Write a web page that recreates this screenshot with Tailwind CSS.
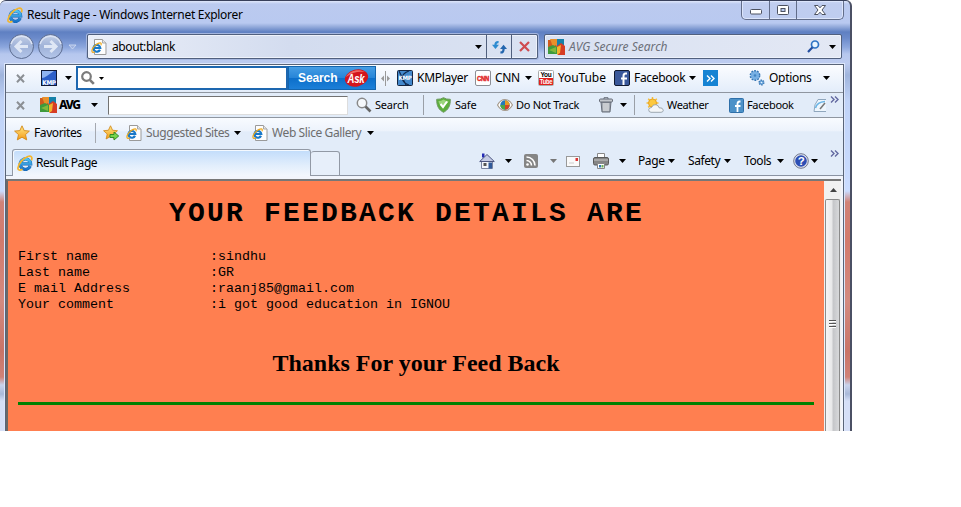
<!DOCTYPE html>
<html lang="en">
<head>
<meta charset="utf-8">
<title>Result Page</title>
<script src="https://cdn.jsdelivr.net/npm/@tailwindcss/browser@4"></script>
</head>
<body class="bg-white font-['Noto_Sans',sans-serif] text-[12px] leading-4 text-black">
<svg class="absolute size-0">
  <defs>
    <linearGradient id="blue" x1="0" y1="0" x2="0" y2="1"><stop offset="0" stop-color="#4fc3f3"/><stop offset="1" stop-color="#1a72c6"/></linearGradient>
    <linearGradient id="gold" x1="0" y1="0" x2="0" y2="1"><stop offset="0" stop-color="#ffe98a"/><stop offset="1" stop-color="#f59a14"/></linearGradient>
    <linearGradient id="orb" x1="0" y1="0" x2="0" y2="1"><stop offset="0" stop-color="#c3cfe6"/><stop offset=".5" stop-color="#9fb2d8"/><stop offset="1" stop-color="#b4c6ea"/></linearGradient>
  </defs>
  <symbol id="ie" viewBox="0 0 16 16">
    <path d="M13.2 11.2A5.2 5.2 0 1 1 13.600 8.800H4.500" fill="none" stroke="#1263ae" stroke-width="3.300"/>
    <path d="M13.2 11.2A5.2 5.2 0 1 1 13.600 8.800H4.500" fill="none" stroke="url(#blue)" stroke-width="2.500"/>
    <path d="M14.400 5.400C15.800 2 14 .3 10.800 1.500C6 3.300 1.200 9 .9 13c-.1 2.300 2 2.600 4.600 1.300" fill="none" stroke="#f3b62c" stroke-width="1.700"/>
  </symbol>
  <symbol id="iepage" viewBox="0 0 16 16">
    <path d="M3.500.5h8l3.500 3.500v11.500h-11.500z" fill="#fdfdfd" stroke="#9a9a9a"/><path d="M11.500.5v3.500h3.500" fill="#e4e4e4" stroke="#a8a8a8"/>
    <path d="M9 10.800A3.400 3.400 0 1 1 9.300 9H3.500" fill="none" stroke="#1878c8" stroke-width="2.200"/>
    <path d="M10 6.200c.8-2.200-.4-2.800-2.800-1.800C4.200 5.700 1 9.200.9 12c0 1.600 1.300 1.700 2.900.8" fill="none" stroke="#f0a91a" stroke-width="1.200"/>
  </symbol>
  <symbol id="caret" viewBox="0 0 7 4"><path d="M0 0h7L3.500 4z" fill="currentColor"/></symbol>
  <symbol id="close" viewBox="0 0 9 9"><path d="M1 .8l7 7.400M8 .8L1 8.200" stroke="#8b8f94" stroke-width="2"/></symbol>
  <symbol id="avg" viewBox="0 0 17 16">
    <path d="M0 1h8l1 7H0z" fill="#cf5a1e"/><path d="M2 0h7v5L5 8z" fill="#e8902a"/><path d="M9 0h7v8l-4-2-3 2z" fill="#1580a8"/><path d="M0 8l5-2 4 2v7H0z" fill="#3f9a3c"/><path d="M1 11l7-3v6z" fill="#81b83c"/><path d="M9 7l4-3 4 3v9h-7z" fill="#d63c24"/><path d="M9 8l4-2-1 8-3 2z" fill="#f2b32c"/>
  </symbol>
  <symbol id="chev" viewBox="0 0 9 7"><path d="M1 .5l3 3-3 3M5 .5l3 3-3 3" fill="none" stroke="currentColor" stroke-width="1.400"/></symbol>
  <symbol id="star" viewBox="0 0 16 16"><path d="M8 .8l2.200 4.800 5.200.5-3.900 3.500 1.200 5.300L8 12.200l-4.700 2.700 1.200-5.300L.6 6.100l5.200-.5z" fill="url(#gold)" stroke="#d28a1a" stroke-width=".9"/></symbol>
</svg>

<main class="relative flex h-[431px] w-[852px] flex-col overflow-hidden rounded-t-[6px] border-t border-r-2 border-t-[#38405a] border-r-[#4b5064] bg-[linear-gradient(180deg,#dfe7fa_0px,#bbcaef_3px,#b9c9f0_22px,#92a9da_26px,#5f80c2_31px,#6b8aca_37px,#8ba6dd_46px,#b6c7ee_53px,#bdccf0_62px,#9fb4dc_74px,#c0d3f7_100px,#cadcff_190px,#d08277_201px,#d27a6c_240px,#d38a80_300px,#c97467_350px,#d08277_376px,#c9d3ec_384px,#a9b9d9_393px,#d5dff7_400px,#d5dff7_431px)]">
  <!-- Title bar -->
  <header class="flex h-[31px] shrink-0 items-start pl-[7px]">
    <svg class="mt-[6px] size-4 shrink-0"><use href="#ie"/></svg>
    <h1 class="mt-[6px] ml-1 w-[714px] whitespace-nowrap tracking-[-0.29px]">Result Page - Windows Internet Explorer</h1>
    <div class="flex h-[19px] w-[103px] shrink-0 rounded-b-[5px] border border-t-0 border-[#626d89] bg-[#c2cff0]/70 shadow-[inset_0_0_0_1px_#dce5fb]">
      <span class="flex w-[28px] items-center justify-center border-r border-[#626d89]"><svg class="mt-1 h-[6px] w-3" viewBox="0 0 12 6"><rect x=".5" y=".5" width="11" height="4.500" rx="1" fill="#fff" stroke="#4d5260"/></svg></span>
      <span class="flex w-[27px] items-center justify-center border-r border-[#626d89]"><svg class="h-[10px] w-3" viewBox="0 0 12 10"><rect x=".5" y=".5" width="11" height="9" rx="1" fill="#fff" stroke="#4d5260"/><rect x="4" y="3.500" width="4" height="3" fill="#b9c9f0" stroke="#4d5260"/></svg></span>
      <span class="flex flex-1 items-center justify-center"><svg class="h-[10px] w-3" viewBox="0 0 12 10"><path d="M.5.5h3.500l2 2.300 2-2.300h3.500L8 5l3.500 4.500H8L6 7.200 4 9.500H.5L4 5z" fill="#fff" stroke="#4d5260"/></svg></span>
    </div>
  </header>

  <!-- Navigation bar -->
  <nav class="flex h-[32px] shrink-0 items-start pl-[8px]">
    <svg class="mt-[1px] h-[27px] w-[70px] shrink-0" viewBox="0 0 70 27">
      <g fill="url(#orb)" stroke="#5c6c90"><circle cx="13.500" cy="13.500" r="12"/><circle cx="42.500" cy="13.500" r="12"/></g>
      <path d="M3 11a11 11 0 0 1 21 0M32 11a11 11 0 0 1 21 0" fill="none" stroke="#dbe3f3" stroke-width="1.500"/>
      <path d="M20 13.500H8m5.500-5.500L8 13.500l5.500 5.500M36 13.500h12m-5.500-5.500l5.500 5.500-5.500 5.500" fill="none" stroke="#dfe7f5" stroke-width="3"/>
      <path d="M61 12h7l-3.500 4z" fill="#9db1de" stroke="#d3def4" stroke-width=".8"/>
    </svg>
    <div class="mt-[2px] ml-[9px] flex h-[25px] w-[451px] shrink-0 items-center rounded-[2px] border border-[#51607e] bg-[linear-gradient(90deg,#ebeff8,#d3dcef_45%,#dae2f2)] pl-[3px] shadow-[inset_0_0_0_1px_#eef2fb,0_0_0_1px_#a4b6df]">
      <svg class="size-4"><use href="#iepage"/></svg>
      <span class="ml-[5px] w-[364px] whitespace-nowrap tracking-[-0.4px]">about:blank</span>
      <svg class="mr-[4px] h-1 w-[7px]"><use href="#caret"/></svg>
      <span class="flex h-full w-[25px] items-center justify-center border-l border-[#51607e]"><svg class="h-4 w-[15px]" viewBox="0 0 16 16"><path d="M7 2.700C4.500 2.500 3.700 4 3.700 6V7" fill="none" stroke="#2e8bd0" stroke-width="2.400"/><path d="M0 5.500h7.400L3.700 10z" fill="#2e8bd0"/><path d="M9 13.800c2.500.2 3.300-1.300 3.300-3.300V9" fill="none" stroke="#2466ae" stroke-width="2.400"/><path d="M8.600 10H16l-3.700-4.500z" fill="#2466ae"/></svg></span>
      <span class="flex h-full w-[26px] items-center justify-center border-l border-[#51607e]"><svg class="size-[11px]" viewBox="0 0 11 11"><path d="M1 1l9 9M10 1L1 10" stroke="#cf4c50" stroke-width="2.200"/></svg></span>
    </div>
    <div class="mt-[2px] ml-[6px] flex h-[25px] w-[298px] shrink-0 items-center rounded-[2px] border border-[#51607e] bg-[linear-gradient(90deg,#d9e1f2,#e3e8f4)] pl-[3px] shadow-[inset_0_0_0_1px_#eef2fb]">
      <svg class="h-4 w-[17px]"><use href="#avg"/></svg>
      <span class="ml-[4px] w-[238px] whitespace-nowrap tracking-[0.02px] text-[#6c7079] italic">AVG Secure Search</span>
      <svg class="h-[13px] w-[13px]" viewBox="0 0 13 13"><circle cx="8" cy="4.500" r="3.500" fill="#eaf6ff" stroke="#2f74c4" stroke-width="1.700"/><path d="M5.500 7.300L1 12" stroke="#234fa0" stroke-width="2.200"/></svg>
      <svg class="ml-[9px] h-1 w-[7px]"><use href="#caret"/></svg>
    </div>
  </nav>

  <div class="ml-[5px] flex w-[839px] flex-1 flex-col border border-b-0 border-[#596478] bg-[#e2ecf9] shadow-[0_0_0_1px_#dce6fb]">
    <!-- Ask toolbar -->
    <div class="flex h-[28px] shrink-0 items-center border-b border-[#8f96a0] bg-[linear-gradient(#fbfcff,#e3edfa)] pb-px pl-[10px] tracking-[-0.3px] whitespace-nowrap *:shrink-0">
      <svg class="size-[9px]"><use href="#close"/></svg>
      <svg class="ml-4 size-4" viewBox="0 0 16 16"><rect x=".5" y=".5" width="15" height="15" fill="#2d5fc8" stroke="#101935"/><path d="M1 8c3 0 6-3 12-7H1z" fill="#8fb3f0"/><text x="1.300" y="14.500" font-size="6.500" font-weight="700" fill="#fff" textLength="13.500" lengthAdjust="spacingAndGlyphs" font-family="DejaVu Sans">KMP</text></svg>
      <svg class="ml-2 h-1 w-[7px]"><use href="#caret"/></svg>
      <div class="ml-1 flex h-[24px] w-[212px] items-center border-2 border-[#1d67b0] bg-white pl-[3px]">
        <svg class="size-[14px]" viewBox="0 0 14 14"><circle cx="5.500" cy="5.500" r="4.300" fill="none" stroke="#7b7b7b" stroke-width="2.200"/><path d="M8.800 8.800l4 4" stroke="#7b7b7b" stroke-width="2.600"/></svg>
        <svg class="ml-[4px] h-[3px] w-[5px]" viewBox="0 0 5 3"><path d="M0 0h5L2.500 3z"/></svg>
      </div>
      <div class="flex h-[24px] w-[88px] items-center border border-[#1465ae] bg-[linear-gradient(#469de4,#2785d8_48%,#0d6fca_52%,#1c7fd8)] pl-[9px]">
        <b class="w-[46px] font-['Liberation_Sans',sans-serif] tracking-[-0.1px] text-white">Search</b>
        <svg class="h-[20px] w-[25px]" viewBox="0 0 25 20"><ellipse cx="12.500" cy="10" rx="11.800" ry="8.500" transform="rotate(-14 12.500 10)" fill="#d4151c"/><path d="M2 9C5 3 14 0 21 4c-6-1-13 0-19 5z" fill="#ee6b66"/><text x="3.500" y="15" font-family="Liberation Sans" font-size="13" font-weight="700" font-style="italic" fill="#fff" textLength="17" lengthAdjust="spacingAndGlyphs">Ask</text></svg>
      </div>
      <svg class="ml-[5px] h-[15px] w-[9px]" viewBox="0 0 9 15"><path d="M4.500 0v15" stroke="#999"/><path d="M3 4.500v6L0 7.500zM6 4.500v6l3-3z" fill="#999"/></svg>
      <svg class="ml-[7px] size-4" viewBox="0 0 16 16"><rect x=".5" y=".5" width="15" height="15" rx="1" fill="#4388cc" stroke="#15253f"/><path d="M12 1C3 4 3 12 12 15M2 1l7 14" fill="none" stroke="#102a50" stroke-width="1.200"/><text x="1.500" y="10" font-size="6" font-weight="700" fill="#fff" textLength="13" font-family="DejaVu Sans" lengthAdjust="spacingAndGlyphs">KMP</text></svg>
      <span class="ml-1 w-[58px]">KMPlayer</span>
      <svg class="size-4" viewBox="0 0 16 16"><rect x=".5" y=".5" width="15" height="15" rx="1.500" fill="#fff" stroke="#8c8f96"/><text x="2" y="10.500" font-family="Liberation Sans" font-size="7" font-weight="700" fill="#e02222" stroke="#e02222" stroke-width=".4" textLength="12" lengthAdjust="spacingAndGlyphs">CNN</text></svg>
      <span class="ml-1 w-[30px]">CNN</span>
      <svg class="h-1 w-[7px]"><use href="#caret"/></svg>
      <svg class="ml-[6px] size-4" viewBox="0 0 16 16"><rect x=".5" y=".5" width="15" height="15" rx="1" fill="#fff" stroke="#aaa"/><rect x="1" y="8" width="14" height="7" fill="#e2211c"/><g font-family="Liberation Sans" font-weight="700" font-size="7"><text x="2.500" y="6.800" textLength="11" lengthAdjust="spacingAndGlyphs">You</text><text x="1.800" y="14" fill="#fff" textLength="12.500" lengthAdjust="spacingAndGlyphs">Tube</text></g></svg>
      <span class="ml-1 w-[56px] tracking-[-0.1px]">YouTube</span>
      <svg class="size-4" viewBox="0 0 16 16"><rect x=".5" y=".5" width="15" height="15" rx="1.500" fill="#3a589a" stroke="#111a30"/><path d="M13 3.500h-1.500Q9.500 3.500 9.500 6v9M7 8.500h6" fill="none" stroke="#fff" stroke-width="2"/></svg>
      <span class="ml-1 w-[55px]">Facebook</span>
      <svg class="h-1 w-[7px]"><use href="#caret"/></svg>
      <span class="ml-[7px] flex h-4 w-[15px] items-center justify-center bg-[#1683d3] text-white"><svg class="h-[7px] w-[9px]"><use href="#chev"/></svg></span>
      <svg class="ml-[31px] size-4" viewBox="0 0 16 16"><g fill="#70ace2" stroke="#3676b4"><circle cx="6" cy="5.500" r="4.300" stroke-width="2.200" stroke-dasharray="1.800 .9"/><circle cx="12.500" cy="12.500" r="2.200" stroke-width="1.700" stroke-dasharray="1.300 .8"/></g><circle cx="6" cy="5.500" r="4" fill="#77b0e4"/><circle cx="6" cy="5.500" r="1.300" fill="#4284c2"/><circle cx="12.500" cy="12.500" r=".8" fill="#e5f1fc"/></svg>
      <span class="ml-1 w-[54px]">Options</span>
      <svg class="h-1 w-[7px]"><use href="#caret"/></svg>
    </div>

    <!-- AVG toolbar -->
    <div class="flex h-[25px] shrink-0 items-center border-b border-[#8f96a0] pl-[10px] text-[11px] tracking-[-0.2px] whitespace-nowrap *:shrink-0">
      <svg class="size-[9px]"><use href="#close"/></svg>
      <svg class="ml-[15px] h-4 w-[17px]"><use href="#avg"/></svg>
      <b class="ml-[2px] w-[32px] text-[12px] font-extrabold tracking-[-1.3px]">AVG</b>
      <svg class="h-1 w-[7px]"><use href="#caret"/></svg>
      <div class="ml-[10px] h-[19px] w-[240px] border border-t-[#727272] border-r-[#ddd] border-b-[#ddd] border-l-[#727272] bg-white"></div>
      <svg class="ml-[8px] size-4" viewBox="0 0 16 16"><circle cx="6" cy="6" r="4.700" fill="#f5f8fb" stroke="#888" stroke-width="1.500"/><path d="M9.500 9.500l5 5" stroke="#666" stroke-width="2.600"/></svg>
      <span class="ml-[3px] w-[48px]">Search</span>
      <i class="h-[20px] w-px bg-[#9a9fa7]"></i>
      <svg class="ml-[12px] h-4 w-[15px]" viewBox="0 0 15 16"><path d="M7.500.7Q10.500 2.500 14.300 2.300C14.500 9 12 13 7.500 15.300 3 13 .5 9 .7 2.300Q4.500 2.500 7.500.7z" fill="#5cae3c" stroke="#6e9a62"/><path d="M2.500 4Q5 4 7.500 2.500 10 4 12.500 4 12 7 7 8 3 9 2.500 4z" fill="#9bd67c"/><path d="M4.500 7l2.500 3 4-5.500" fill="none" stroke="#fff" stroke-width="2"/></svg>
      <span class="ml-[4px] w-[42px]">Safe</span>
      <svg class="size-4" viewBox="0 0 16 16"><path d="M.5 8Q3.500 2.500 8 2.500T15.500 8Q12.500 13.500 8 13.500T.5 8z" fill="#fff" stroke="#a59a8c" stroke-width="1.200"/><circle cx="8" cy="8" r="4.700" fill="#2478b8"/><path d="M8 8V3.300A4.700 4.700 0 0 1 12.700 8z" fill="#e69c22"/><path d="M8 8h4.700A4.700 4.700 0 0 1 8 12.700z" fill="#d44326"/><path d="M8 8v4.700A4.700 4.700 0 0 1 3.300 8z" fill="#4da645"/></svg>
      <span class="ml-[3px] w-[83px] tracking-[-0.3px]">Do Not Track</span>
      <svg class="h-4 w-[14px]" viewBox="0 0 14 16"><path d="M2 5h10l-1 10H3z" fill="#a3a9b2" stroke="#676d78"/><path d="M5 6v8M7 6v8M9 6v8" stroke="#eee"/><path d="M5 2V.7h4V2" fill="none" stroke="#676d78"/><rect x=".5" y="2" width="13" height="3" rx="1" fill="#c3c7cd" stroke="#676d78"/></svg>
      <svg class="ml-[7px] h-1 w-[7px]"><use href="#caret"/></svg>
      <i class="ml-[7px] h-[20px] w-px bg-[#9a9fa7]"></i>
      <svg class="ml-[11px] h-4 w-[18px]" viewBox="0 0 18 16"><g stroke="#f4bd3c" stroke-width="1.500"><path d="M6.500 0v12M.5 6h12M2.200 1.800l8.600 8.600M10.800 1.800l-8.600 8.600"/></g><circle cx="6.500" cy="6" r="4" fill="#fdc93f" stroke="#e8a422"/><path d="M5 15.300Q2.500 15 2.700 12.700 3 10.500 5.500 10.500 7 7 10 7.700 12.500 8 13 10.700 17 10.500 17.300 13.200 17.200 15.300 15 15.300z" fill="#f4f6f8" stroke="#8c959e" stroke-width=".8"/></svg>
      <span class="ml-[3px] w-[62px] tracking-[-0.35px]">Weather</span>
      <svg class="h-[15px] w-[15px]" viewBox="0 0 15 15"><rect x=".5" y=".5" width="14" height="14" rx="1" fill="#4c91c8" stroke="#2e6fa9"/><path d="M11.500 3.500h-1Q8.500 3.500 8.500 6v8M6 8h5.500" fill="none" stroke="#fff" stroke-width="1.800"/></svg>
      <span class="ml-[3px] w-[66px] tracking-[-0.35px]">Facebook</span>
      <svg class="h-[15px] w-[13px]" viewBox="0 0 13 15"><path d="M13 1.500H5Q1 6 1 13.500H13" fill="#eef6fd" stroke="#8fa6bd"/><path d="M2.500 10Q4 4 12 3.500" fill="none" stroke="#69b4e6" stroke-width="1.500"/><path d="M7 11l5-6" stroke="#777" stroke-width="1.500"/></svg>
      <svg class="mb-[11px] ml-[4px] h-[7px] w-[9px] text-[#6268a0]"><use href="#chev"/></svg>
    </div>

    <!-- Favorites bar -->
    <div class="flex h-[31px] shrink-0 items-center bg-[linear-gradient(#f8fbff,#edf3fc_40%,#e2ecf9_45%)] pb-px pl-[8px] tracking-[-0.4px] whitespace-nowrap *:shrink-0">
      <svg class="size-4"><use href="#star"/></svg>
      <span class="ml-[4px] w-[61px]">Favorites</span>
      <i class="h-[20px] w-px bg-[#a5a9b0]"></i>
      <svg class="ml-[7px] size-4" viewBox="0 0 16 16"><use href="#star" width="15" height="15"/><path d="M7 9.500h4V7l4.700 4-4.700 4v-2.500H7z" fill="#77d44c" stroke="#328e27"/></svg>
      <svg class="ml-[7px] size-4"><use href="#iepage"/></svg>
      <span class="ml-[4px] w-[88px] text-[#6d6d6d]">Suggested Sites</span>
      <svg class="h-1 w-[7px]"><use href="#caret"/></svg>
      <svg class="ml-[11px] size-4"><use href="#iepage"/></svg>
      <span class="ml-[4px] w-[95px] text-[#6d6d6d]">Web Slice Gallery</span>
      <svg class="h-1 w-[7px]"><use href="#caret"/></svg>
    </div>

    <!-- Tabs and commands -->
    <div class="flex h-[27px] shrink-0 items-end whitespace-nowrap *:shrink-0">
      <i class="h-px w-[6px] bg-[#8a93a3]"></i>
      <div class="flex h-[27px] w-[299px] items-center rounded-t-[3px] border border-b-0 border-[#9299a5] bg-[linear-gradient(#c1dcfb,#e2eefc_60%,#f3f7fd)] pl-[4px] shadow-[inset_1px_1px_0_#f4f9ff]">
        <svg class="size-4"><use href="#ie"/></svg>
        <span class="ml-[3px] tracking-[-0.45px]">Result Page</span>
      </div>
      <div class="h-[25px] w-[29px] rounded-t-[3px] border border-l-0 border-[#9299a5] bg-[#e7effa]"></div>
      <div class="flex h-[27px] flex-1 items-center border-b border-[#8a93a3] pb-[2px] pl-[139px] tracking-[-0.4px] *:shrink-0">
        <svg class="size-4" viewBox="0 0 16 16"><path d="M3 .500h2.500v4H3z" fill="#242ab4"/><path d="M2.500 8h11v7.500h-11z" fill="#f4f6fb" stroke="#7b84a0"/><path d="M.7 8.500L8 1.500l7.300 7z" fill="#c4cbe4" stroke="#4c5580"/><path d="M9.500 9.500h3.500v6H9.500z" fill="#315a9a"/><path d="M4.500 10h3v3h-3z" fill="#555"/></svg>
        <svg class="ml-[10px] h-1 w-[7px]"><use href="#caret"/></svg>
        <svg class="ml-[12px] size-[14px]" viewBox="0 0 14 14"><rect width="14" height="14" rx="2" fill="#858585"/><circle cx="3.500" cy="10.500" r="1.300" fill="#fff"/><path d="M2.500 6.500a5 5 0 0 1 5 5M2.500 3a8.500 8.500 0 0 1 8.500 8.500" fill="none" stroke="#fff" stroke-width="1.600"/></svg>
        <svg class="ml-[12px] h-1 w-[7px] text-[#777]"><use href="#caret"/></svg>
        <svg class="ml-[9px] h-[11px] w-[14px]" viewBox="0 0 14 11"><rect x=".5" y=".5" width="13" height="10" fill="#fafafa" stroke="#999"/><rect x="9.500" y="2" width="2.500" height="3" fill="#dc3434"/><path d="M3 7h5" stroke="#ccc"/></svg>
        <svg class="ml-[13px] size-4" viewBox="0 0 16 16"><path d="M4.500.500h7V6h-7z" fill="#fff" stroke="#888"/><rect x=".5" y="4.500" width="15" height="7.500" rx="1.500" fill="#858585" stroke="#5a5a5a"/><path d="M1 7h14" stroke="#c7c7c7"/><path d="M4.500 10.500h7v5h-7z" fill="#fff" stroke="#888"/><path d="M6 12h2v2.500H6z" fill="#3676b4"/><path d="M8.500 12h2v2.500h-2z" fill="#6aad55"/></svg>
        <svg class="ml-[10px] h-1 w-[7px]"><use href="#caret"/></svg>
        <span class="ml-[12px] w-[30px]">Page</span><svg class="h-1 w-[7px]"><use href="#caret"/></svg>
        <span class="ml-[13px] w-[36px]">Safety</span><svg class="h-1 w-[7px]"><use href="#caret"/></svg>
        <span class="ml-[13px] w-[33px]">Tools</span><svg class="h-1 w-[7px]"><use href="#caret"/></svg>
        <svg class="ml-[9px] size-4" viewBox="0 0 16 16"><circle cx="8" cy="8" r="7.300" fill="#dfe3ef" stroke="#70768c"/><circle cx="8" cy="8" r="5.800" fill="#2c4eb4"/><text x="8" y="12.200" text-anchor="middle" font-family="Liberation Sans" font-weight="700" font-size="11.500" fill="#fff">?</text></svg>
        <svg class="ml-[2px] h-1 w-[7px]"><use href="#caret"/></svg>
        <svg class="mb-[15px] ml-[12px] h-[7px] w-[9px] text-[#6268a0]"><use href="#chev"/></svg>
      </div>
    </div>

    <!-- Document viewport -->
    <div class="flex flex-1 bg-[#f2f5fc] pt-[3px]">
      <article class="w-[818px] border-t-2 border-l-2 border-[#696969] border-t-[#777] bg-[#ff7f50] pl-[10px]">
        <h2 class="mt-[17px] pl-[151px] font-['Liberation_Mono',monospace] text-[28px] leading-[32px] font-bold tracking-[2.200px] whitespace-pre">YOUR FEEDBACK DETAILS ARE</h2>
        <pre class="mt-[19px] font-['Liberation_Mono',monospace] text-[13.330px] leading-4">First name              :sindhu
Last name               :GR
E mail Address          :raanj85@gmail.com
Your comment            :i got good education in IGNOU</pre>
        <h3 class="mt-[36px] w-[796px] text-center font-['Liberation_Serif',serif] text-[24px] leading-[28px] font-bold">Thanks For your Feed Back</h3>
        <div class="mt-[25px] h-[3px] w-[796px] bg-[#008000]"></div>
      </article>
      <aside class="flex w-[17px] flex-col border-t-2 border-t-[#777] bg-[#f1f1f1] pl-px">
        <span class="flex h-[18px] items-center justify-center"><svg class="h-1 w-[7px] rotate-180 text-[#444]"><use href="#caret"/></svg></span>
        <div class="flex w-[15px] flex-1 flex-col items-center gap-[1px] rounded-t-[2px] border border-b-0 border-[#8b8b8b] bg-[linear-gradient(90deg,#f6f6f6,#e8e8e9_45%,#c5c6c9_55%,#d8d9db)] pt-[120px]">
          <i class="h-[2px] w-[7px] border-t border-[#555] bg-white"></i><i class="h-[2px] w-[7px] border-t border-[#555] bg-white"></i><i class="h-[2px] w-[7px] border-t border-[#555] bg-white"></i>
        </div>
      </aside>
    </div>
  </div>
</main>
</body>
</html>
